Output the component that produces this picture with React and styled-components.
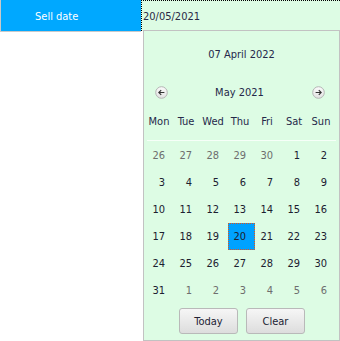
import React from 'react';
import styled, { createGlobalStyle } from 'styled-components';

const GlobalStyle = createGlobalStyle`
    html, body {
        margin: 0;
        padding: 0;
        background: #ffffff;
    }
    body {
        font-family: "DejaVu Sans Condensed", "Liberation Sans", sans-serif;
        font-size: 11px;
    }
`

const Page = styled.div`
    position: relative;
    width: 340px;
    height: 341px;
    overflow: hidden;
`

const Row = styled.div`
    display: flex;
    height: 31px;
`

const Label = styled.div`
    box-sizing: border-box;
    width: 141px;
    height: 32px;
    padding-left: 34px;
    padding-top: 1px;
    display: flex;
    align-items: center;
    background: #00a8ff;
    color: #ffffff;
    border-left: 1px solid #c9c9c9;
    border-bottom: 1px solid #c9c9c9;
`

const Input = styled.div`
    box-sizing: border-box;
    flex: 1;
    height: 31px;
    padding-left: 1px;
    padding-top: 1px;
    display: flex;
    align-items: center;
    background: #ddfce4;
    color: #2a2a44;
    border-top: 1px dotted #000000;
    border-left: 1px dotted #000000;
`

// dropdown calendar lies over the page
const Popup = styled.div`
    position: absolute;
    left: 143px;
    top: 30px;
    box-sizing: border-box;
    width: 197px;
    height: 311px;
    padding: 0 3px;
    background: #ddfce4;
    border: 1px solid #c2c2c2;
    color: #25284a;
`

const Title = styled.div`
    height: 46px;
    display: flex;
    align-items: center;
    justify-content: center;
`

const Nav = styled.div`
    height: 30px;
    display: flex;
    align-items: center;
    justify-content: space-between;
    padding: 0 11px 0 8px;
`

const NavButton = styled.span`
    display: flex;
    width: 13px;
    height: 13px;
`

const Month = styled.span`
    padding-right: 1px;
`

const Grid = styled.div`
    display: grid;
    grid-template-columns: repeat(7, 27px);
`

const WeekDay = styled.div`
    height: 28px;
    display: flex;
    align-items: center;
    justify-content: center;
    padding-right: 3px;
`

const Separator = styled.div`
    height: 1px;
    margin: 5px 0 1px 0;
    background: #f6fff8;
`

const Day = styled.div`
    box-sizing: border-box;
    height: 27px;
    display: flex;
    align-items: center;
    justify-content: flex-end;
    padding-right: 8px;
    color: ${p => p.$other ? '#6e6e6e' : '#1c2030'};
    background: ${p => p.$selected ? '#00a2ff' : 'transparent'};
    border: 1px dotted ${p => p.$selected ? '#e0561c' : 'transparent'};
`

const Buttons = styled.div`
    display: flex;
    justify-content: center;
    gap: 8px;
    margin-top: 4px;
    padding-left: 1px;
`

const Button = styled.button`
    box-sizing: border-box;
    width: 59px;
    height: 26px;
    border: 1px solid #b9b9b9;
    border-radius: 3px;
    background: linear-gradient(#f6f6f6, #dddddd);
    font-family: inherit;
    font-size: 11px;
    color: #222233;
    padding: 0;
`

const Arrow = ({ right }) => (
    <svg width="13" height="13" viewBox="0 0 13 13">
        <defs>
            <linearGradient id={right ? 'gr' : 'gl'} x1="0" y1="0" x2="0" y2="1">
                <stop offset="0" stopColor="#fbfbfb" />
                <stop offset="1" stopColor="#e2e2e2" />
            </linearGradient>
        </defs>
        <circle cx="6.5" cy="6.5" r="5.8" fill={`url(#${right ? 'gr' : 'gl'})`} stroke="#b4b4b4" strokeWidth="1" />
        {right ? (
            <path d="M3.6 6.5 H9.2 M6.8 4.1 L9.2 6.5 L6.8 8.9" fill="none" stroke="#333" strokeWidth="1.1" />
        ) : (
            <path d="M9.4 6.5 H3.8 M6.2 4.1 L3.8 6.5 L6.2 8.9" fill="none" stroke="#333" strokeWidth="1.1" />
        )}
    </svg>
)

const week_days = ['Mon', 'Tue', 'Wed', 'Thu', 'Fri', 'Sat', 'Sun']

const make_days = () => {
    let days = []
    for (let d = 26; d <= 30; d++) days.push({ n: d, other: true })
    for (let d = 1; d <= 31; d++) days.push({ n: d, other: false })
    for (let d = 1; d <= 6; d++) days.push({ n: d, other: true })
    return days
}

const App = () => {
    const days = make_days()
    return (
        <>
            <GlobalStyle />
            <Page>
                <Row>
                    <Label>Sell date</Label>
                    <Input>20/05/2021</Input>
                </Row>
                <Popup>
                    <Title>07 April 2022</Title>
                    <Nav>
                        <NavButton><Arrow /></NavButton>
                        <Month>May 2021</Month>
                        <NavButton><Arrow right /></NavButton>
                    </Nav>
                    <Grid>
                        {week_days.map(w => <WeekDay key={w}>{w}</WeekDay>)}
                    </Grid>
                    <Separator />
                    <Grid>
                        {days.map((d, i) => (
                            <Day key={i} $other={d.other} $selected={!d.other && d.n === 20}>
                                {d.n}
                            </Day>
                        ))}
                    </Grid>
                    <Buttons>
                        <Button>Today</Button>
                        <Button>Clear</Button>
                    </Buttons>
                </Popup>
            </Page>
        </>
    )
}

export default App;
